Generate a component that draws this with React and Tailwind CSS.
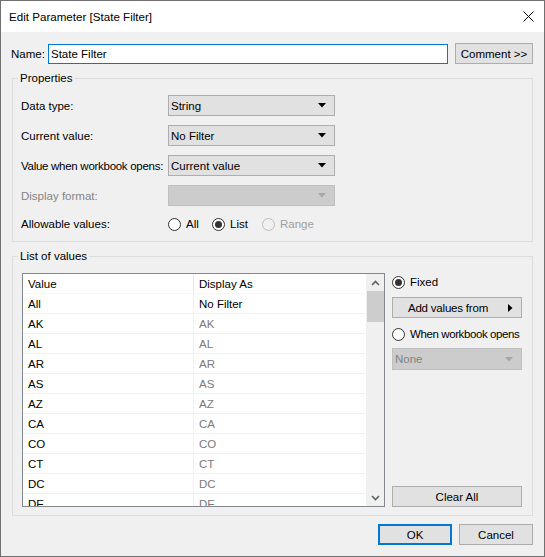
import React from "react"

const rows = ["AK", "AL", "AR", "AS", "AZ", "CA", "CO", "CT", "DC", "DE"]

function Caret({ disabled }) {
  return (
    <svg width="8" height="5" viewBox="0 0 8 5" className="shrink-0">
      <path d="M0 0 H8 L4 4.5 Z" fill={disabled ? "#a6a6a6" : "#000"} />
    </svg>
  )
}

function Combo({ value, disabled, className = "" }) {
  return (
    <div
      className={`h-[21px] w-[167px] flex items-center justify-between pl-[2px] pr-[8px] border ${
        disabled ? "bg-[#cccccc] border-[#bfbfbf] text-[#838383]" : "bg-[#e1e1e1] border-[#adadad]"
      } ${className}`}
    >
      <span>{value}</span>
      <Caret disabled={disabled} />
    </div>
  )
}

function Radio({ checked, disabled, label, className = "", labelClass = "" }) {
  return (
    <div className={`flex items-center gap-[5px] ${className}`}>
      <div
        className={`w-[13px] h-[13px] shrink-0 rounded-full border flex items-center justify-center ${
          disabled ? "border-[#bcbcbc] bg-[#f0f0f0]" : "border-[#333333] bg-white"
        }`}
      >
        {checked && <div className="w-[7px] h-[7px] rounded-full bg-[#333333]" />}
      </div>
      <span className={`${disabled ? "text-[#a0a0a0]" : ""} ${labelClass}`}>{label}</span>
    </div>
  )
}

function Button({ children, className = "" }) {
  return (
    <div className={`h-[21px] flex items-center justify-center bg-[#e1e1e1] border border-[#adadad] ${className}`}>
      {children}
    </div>
  )
}

export default function App() {
  return (
    <div className="w-[545px] h-[557px] bg-[#f0f0f0] border border-[#707070] flex flex-col font-['Segoe_UI','Liberation_Sans',sans-serif] text-[11.5px] leading-[16px] text-black whitespace-nowrap select-none">
      {/* Title bar */}
      <div className="h-[31px] bg-white flex items-center justify-between pl-[8px] pr-[10px] shrink-0">
        <span className="text-[11.6px]">Edit Parameter [State Filter]</span>
        <svg width="11" height="11" viewBox="0 0 11 11">
          <path d="M0.5 0.5 L10.5 10.5 M10.5 0.5 L0.5 10.5" stroke="#000" strokeWidth="1" />
        </svg>
      </div>

      <div className="flex flex-col pl-[11px] pr-[11px]">
        {/* Name row */}
        <div className="flex items-center mt-[11px] h-[21px]">
          <span className="w-[36px] -ml-[1px]">Name:</span>
          <div className="w-[400px] h-[20px] border border-[#0078d7] bg-white flex items-center pl-[2px] ml-[1px]">
            State Filter
          </div>
          <Button className="w-[78px] ml-[7px]">Comment &gt;&gt;</Button>
        </div>

        {/* Properties */}
        <fieldset className="mt-[6px] h-[172px] border border-[#dcdcdc] pl-[8px] pr-[8px]">
          <legend className="-ml-[3px] px-[2px] leading-[16px]">Properties</legend>
          <div className="flex items-center mt-[9px]">
            <span className="w-[147px]">Data type:</span>
            <Combo value="String" />
          </div>
          <div className="flex items-center mt-[9px]">
            <span className="w-[147px]">Current value:</span>
            <Combo value="No Filter" />
          </div>
          <div className="flex items-center mt-[9px]">
            <span className="w-[147px] tracking-[-0.28px]">Value when workbook opens:</span>
            <Combo value="Current value" />
          </div>
          <div className="flex items-center mt-[9px]">
            <span className="w-[147px] text-[#838383]">Display format:</span>
            <Combo value="" disabled />
          </div>
          <div className="flex items-center mt-[8px] h-[20px]">
            <span className="w-[147px]">Allowable values:</span>
            <Radio label="All" className="w-[44px]" />
            <Radio label="List" checked className="w-[50px]" />
            <Radio label="Range" disabled />
          </div>
        </fieldset>

        {/* List of values */}
        <fieldset className="mt-[6px] h-[268px] border border-[#dcdcdc] pl-[9px] pr-[9px]">
          <legend className="-ml-[4px] px-[2px] leading-[16px]">List of values</legend>
          <div className="flex mt-[9px] h-[234px]">
            {/* List box */}
            <div className="w-[363px] h-[234px] border border-[#828790] bg-white flex overflow-hidden">
              <div className="flex-1 flex flex-col border-r border-[#f0f0f0] overflow-hidden">
                <div className="flex h-[20px] shrink-0 border-b border-[#f7f7f7]">
                  <div className="w-[171px] pl-[5px] flex items-center border-r border-[#e5e5e5]">Value</div>
                  <div className="flex-1 pl-[5px] flex items-center">Display As</div>
                </div>
                <div className="flex h-[20px] shrink-0 border-b border-[#f0f0f0]">
                  <div className="w-[171px] pl-[5px] flex items-center border-r border-[#f0f0f0]">All</div>
                  <div className="flex-1 pl-[5px] flex items-center">No Filter</div>
                </div>
                {rows.map((r) => (
                  <div key={r} className="flex h-[20px] shrink-0 border-b border-[#f0f0f0]">
                    <div className="w-[171px] pl-[5px] flex items-center border-r border-[#f0f0f0]">{r}</div>
                    <div className="flex-1 pl-[5px] flex items-center text-[#7a7a7a]">{r}</div>
                  </div>
                ))}
              </div>
              {/* Scrollbar */}
              <div className="w-[17px] shrink-0 bg-[#f0f0f0] flex flex-col">
                <div className="h-[17px] flex items-center justify-center">
                  <svg width="9" height="6" viewBox="0 0 9 6">
                    <path d="M1 5 L4.5 1.5 L8 5" stroke="#606060" strokeWidth="1.6" fill="none" />
                  </svg>
                </div>
                <div className="h-[31px] bg-[#cdcdcd]" />
                <div className="flex-1" />
                <div className="h-[17px] flex items-center justify-center">
                  <svg width="9" height="6" viewBox="0 0 9 6">
                    <path d="M1 1 L4.5 4.5 L8 1" stroke="#606060" strokeWidth="1.6" fill="none" />
                  </svg>
                </div>
              </div>
            </div>

            {/* Right column */}
            <div className="w-[130px] ml-[7px] flex flex-col">
              <div className="h-[18px] flex items-center">
                <Radio label="Fixed" checked />
              </div>
              <Button className="mt-[6px] relative pr-[18px]">
                <span className="tracking-[-0.2px]">Add values from</span>
                <svg width="5" height="8" viewBox="0 0 5 8" className="absolute right-[8px] top-[6px]">
                  <path d="M0 0 L4.5 4 L0 8 Z" fill="#000" />
                </svg>
              </Button>
              <div className="h-[18px] flex items-center mt-[7px]">
                <Radio label="When workbook opens" labelClass="tracking-[-0.4px]" />
              </div>
              <div className="mt-[5px] h-[22px] border border-[#bfbfbf] bg-[#cccccc] text-[#838383] flex items-center justify-between pl-[2px] pr-[8px]">
                <span>None</span>
                <Caret disabled />
              </div>
              <Button className="mt-auto">Clear All</Button>
            </div>
          </div>
        </fieldset>

        {/* Bottom buttons */}
        <div className="flex justify-end mt-[8px] gap-[7px]">
          <div className="w-[74px] h-[21px] flex items-center justify-center bg-[#e1e1e1] border-2 border-[#0078d7]">OK</div>
          <Button className="w-[74px]">Cancel</Button>
        </div>
      </div>
    </div>
  )
}
